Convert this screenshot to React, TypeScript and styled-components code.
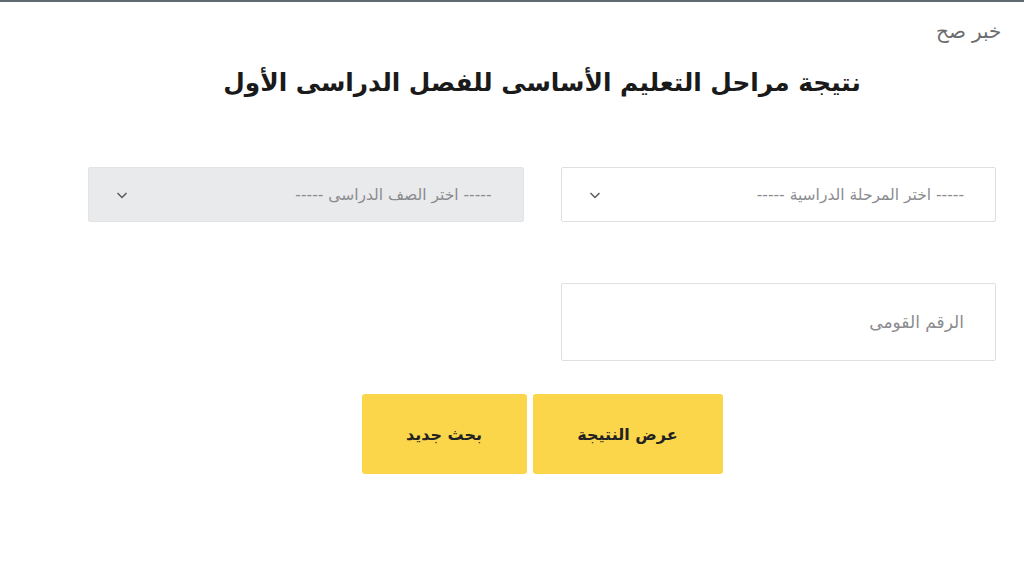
import React from "react";
import styled, { createGlobalStyle } from "styled-components";

const GlobalStyle = createGlobalStyle`
  html, body {
    margin: 0;
    padding: 0;
    background: #fff;
    font-family: "DejaVu Sans", "Noto Sans", sans-serif;
  }
`;

const Page = styled.div`
  position: relative;
  direction: rtl;
  width: 1024px;
  height: 576px;
  box-sizing: border-box;
  border-top: 2px solid #5e6a70;
  background: #fff;
  overflow: hidden;
`;

const Watermark = styled.div`
  position: absolute;
  top: 17px;
  right: 23px;
  font-size: 20px;
  font-weight: 200;
  color: #6c6c6c;
  letter-spacing: -0.5px;
`;

const Content = styled.div`
  margin: 0 28px 0 88px;
`;

const Title = styled.h1`
  margin: 0;
  padding-top: 63px;
  text-align: center;
  font-size: 24.8px;
  font-weight: 700;
  line-height: 36px;
  color: #1a1a1a;
`;

const Form = styled.div`
  margin-top: 66px;
  display: grid;
  grid-template-columns: 1fr 1fr;
  column-gap: 37px;
  row-gap: 61px;
`;

const Field = styled.div<{ $disabled?: boolean; $tall?: boolean }>`
  height: ${(p) => (p.$tall ? "78px" : "55px")};
  box-sizing: border-box;
  border: 1px solid ${(p) => (p.$disabled ? "#e2e3e4" : "#dedfe1")};
  background: ${(p) => (p.$disabled ? "#e9eaeb" : "#fff")};
  border-radius: 2px;
  display: flex;
  align-items: center;
  justify-content: space-between;
  padding: 0 31px 0 26px;
`;

const Placeholder = styled.span<{ $size?: number }>`
  font-size: ${(p) => p.$size ?? 15.5}px;
  color: #8a8c8f;
`;

const Chevron = styled.svg`
  width: 14px;
  height: 14px;
  stroke: #5a5a5a;
  fill: none;
  stroke-width: 1.5;
`;

const Buttons = styled.div`
  grid-column: 1 / span 2;
  display: flex;
  justify-content: center;
  gap: 6px;
  margin-top: -28px;
`;

const Button = styled.button<{ $w: number }>`
  width: ${(p) => p.$w}px;
  height: 80px;
  border: none;
  border-radius: 3px;
  background: #fbd64b;
  color: #222;
  font-family: "DejaVu Sans", sans-serif;
  font-size: 16px;
  font-weight: 700;
  cursor: pointer;
`;

function Select({ label, disabled }: { label: string; disabled?: boolean }) {
  return (
    <Field $disabled={disabled}>
      <Placeholder>{label}</Placeholder>
      <Chevron viewBox="0 0 14 14">
        <path d="M2.5 5 L7 9.5 L11.5 5" />
      </Chevron>
    </Field>
  );
}

export default function App() {
  return (
    <>
      <GlobalStyle />
      <Page>
        <Watermark>خبر صح</Watermark>
        <Content>
          <Title>نتيجة مراحل التعليم الأساسى للفصل الدراسى الأول</Title>
          <Form>
            <Select label="----- اختر المرحلة الدراسية -----" />
            <Select label="----- اختر الصف الدراسى -----" disabled />
            <Field $tall>
              <Placeholder $size={17}>الرقم القومى</Placeholder>
            </Field>
            <div />
            <Buttons>
              <Button $w={190}>عرض النتيجة</Button>
              <Button $w={165}>بحث جديد</Button>
            </Buttons>
          </Form>
        </Content>
      </Page>
    </>
  );
}
